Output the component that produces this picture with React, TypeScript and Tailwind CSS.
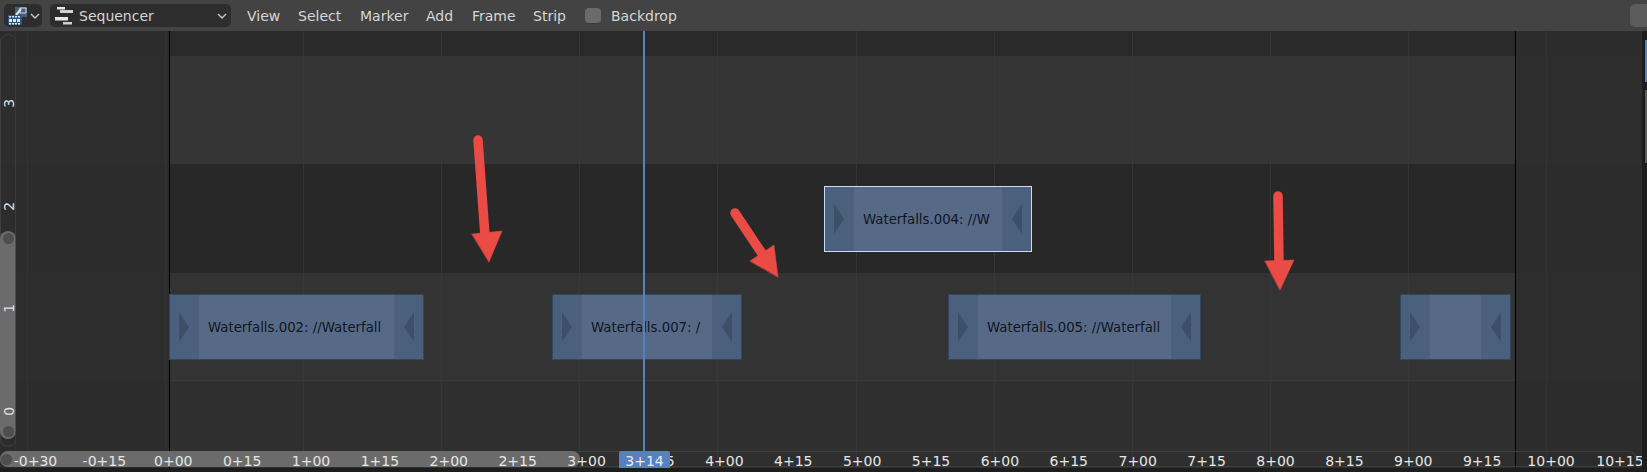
import React from 'react';

const font = { fontFamily: '"DejaVu Sans", sans-serif' };

const menus = [
  { label: 'View', w: 'w-[51px]' },
  { label: 'Select', w: 'w-[62px]' },
  { label: 'Marker', w: 'w-[66px]' },
  { label: 'Add', w: 'w-[46px]' },
  { label: 'Frame', w: 'w-[61px]' },
  { label: 'Strip', w: 'w-[50px]' },
];

const timeLabels = [
  '-0+30', '-0+15', '0+00', '0+15', '1+00', '1+15', '2+00', '2+15', '3+00', '3+15', '4+00',
  '4+15', '5+00', '5+15', '6+00', '6+15', '7+00', '7+15', '8+00', '8+15', '9+00', '9+15',
  '10+00', '10+15',
];

const strips = [
  { left: 169, top: 294, w: 255, label: 'Waterfalls.002: //Waterfall' },
  { left: 552, top: 294, w: 190, label: 'Waterfalls.007: /' },
  { left: 948, top: 294, w: 253, label: 'Waterfalls.005: //Waterfall' },
  { left: 1400, top: 294, w: 111, label: '' },
  { left: 824, top: 186, w: 208, label: 'Waterfalls.004: //W', selected: true },
];

function EditorIcon() {
  return (
    <svg width="22" height="20" viewBox="0 0 22 20">
      <rect x="8" y="1" width="12" height="10" fill="#4a5f7c" />
      <path d="M13 2h6v5h-6z" fill="none" stroke="#d4dbe4" strokeWidth="1" />
      <path d="M9 9l5-6" stroke="#e4e4e4" strokeWidth="2" />
      <rect x="1" y="9" width="14" height="10" fill="#2c5486" />
      <path d="M2 10h2v1.500H2zM5 10h2v1.500H5zM8 10h2v1.500H8zM11 10h2v1.500h-2zM2 13h3v3H2zM6 13h3v3H6zM10 13h3v3h-3zM2 17h2v1.500H2zM5 17h2v1.500H5zM8 17h2v1.500H8zM11 17h2v1.500h-2z" fill="#dfe8f3" />
    </svg>
  );
}

function SequencerIcon() {
  return (
    <svg width="20" height="20" viewBox="0 0 20 20">
      <rect x="3" y="1" width="8" height="2.500" fill="#e8e8e8" />
      <rect x="6" y="4" width="13" height="3" fill="#d2d2d2" />
      <rect x="1" y="11" width="13" height="3.500" fill="#e8e8e8" />
      <rect x="9" y="16" width="9" height="2.500" fill="#d2d2d2" />
    </svg>
  );
}

function Chevron() {
  return (
    <svg width="10" height="6" viewBox="0 0 10 6" fill="none">
      <path d="M1 1l4 4 4-4" stroke="#c8c8c8" strokeWidth="1.4" />
    </svg>
  );
}

function Strip({ left, top, w, label, selected }: { left: number; top: number; w: number; label: string; selected?: boolean }) {
  return (
    <div
      className={`absolute flex h-[66px] border ${selected ? 'border-[#c9dcf2]' : 'border-[#2f4664]'} bg-[#566a88]`}
      style={{ left, top: top - 31, width: w }}
    >
      <div className="flex h-full w-[29px] shrink-0 items-center bg-[#4b607c] pl-[9px]">
        <div className="h-[30px] w-[10px] bg-[#3b4f69] [clip-path:polygon(0_0,100%_50%,0_100%)]" />
      </div>
      <div className="min-w-0 flex-1 overflow-hidden whitespace-nowrap pl-[9px] text-[13.300px] leading-[66px] text-[#10151e]">
        {label}
      </div>
      <div className="flex h-full w-[29px] shrink-0 items-center justify-end bg-[#4b607c] pr-[9px]">
        <div className="h-[30px] w-[10px] bg-[#3b4f69] [clip-path:polygon(100%_0,0_50%,100%_100%)]" />
      </div>
    </div>
  );
}

export default function App() {
  return (
    <div className="flex h-[472px] w-[1647px] flex-col overflow-hidden bg-[#1d1d1d]" style={font}>
      {/* header */}
      <div className="flex h-[31px] shrink-0 items-center bg-[#434343] pl-[4px] text-[14px] text-[#d6d6d6]">
        <div className="flex h-[23px] w-[38px] items-center gap-[1px] rounded-[5px] bg-[#2d2d2d] pl-[3px]">
          <EditorIcon />
          <Chevron />
        </div>
        <div className="ml-[8px] flex h-[23px] w-[181px] items-center rounded-[5px] bg-[#2d2d2d] pl-[4px] pr-[4px]">
          <SequencerIcon />
          <span className="ml-[5px] flex-1 pt-[2px]">Sequencer</span>
          <Chevron />
        </div>
        <div className="ml-[16px] flex pt-[2px]">
          {menus.map(m => (
            <span key={m.label} className={m.w}>{m.label}</span>
          ))}
        </div>
        <div className="ml-[2px] h-[16px] w-[16px] rounded-[4px] border-b border-[#3a3a3a] bg-[#6a6a6a]" />
        <span className="ml-[10px] pt-[2px]">Backdrop</span>
        <div className="ml-auto h-[23px] w-[17px] rounded-l-[5px] bg-[#5c5c5c]" />
      </div>

      {/* canvas */}
      <div className="relative flex h-[441px] flex-col overflow-hidden bg-[#2e2e2e]">
        <div className="h-[25px] bg-[#2a2a2a]" />
        <div className="h-[108px] bg-[#353535]" />
        <div className="h-[109px] bg-[#282828]" />
        <div className="h-[108px] border-b border-[#3b3b3b] bg-[#333333]" />
        <div className="flex-1 bg-[#2f2f2f]" />

        {/* vertical grid */}
        <div className="absolute inset-0 ml-[27px] flex">
          {Array.from({ length: 12 }).map((_, i) => (
            <div key={i} className="h-full w-[138.100px] shrink-0 border-l border-[#3a3a3a]/70" />
          ))}
        </div>

        {/* out of range shade */}
        <div className="absolute bottom-0 left-0 top-0 w-[170px] border-r border-black bg-[#2c2c2c]/90" />
        <div className="absolute bottom-0 left-[1515px] top-0 right-0 border-l border-black bg-[#2c2c2c]/90" />

        {/* gridlines again over the shade, faint */}
        <div className="absolute bottom-0 left-[27px] top-0 w-px bg-[#353535]/70" />
        <div className="absolute bottom-0 left-[165px] top-0 w-px bg-[#353535]/70" />
        <div className="absolute bottom-0 left-[1546px] top-0 w-px bg-[#353535]/70" />

        {strips.map(s => (
          <Strip key={s.left} {...s} />
        ))}

        {/* playhead */}
        <div className="absolute bottom-0 left-[643px] top-0 w-[2px] bg-[#5680c2]" />

        {/* arrows */}
        <svg className="absolute left-0 top-[-31px]" width="1647" height="472" viewBox="0 0 1647 472">
          <g fill="#ea4b44" stroke="#ea4b44" strokeLinecap="round">
            <path d="M478 140L485 236" strokeWidth="9.500" fill="none" />
            <path d="M472 234L502 231L489 262Z" strokeWidth="0.5" />
            <path d="M735 213L763 255" strokeWidth="9.500" fill="none" />
            <path d="M750 261L774 245L778 277Z" strokeWidth="0.5" />
            <path d="M1278 196L1279 264" strokeWidth="9.500" fill="none" />
            <path d="M1265 261L1294 260L1280 290Z" strokeWidth="0.5" />
          </g>
        </svg>

        {/* channel scrollbar */}
        <div className="absolute left-0 top-[3px] h-[413px] w-[16px] rounded-[8px] border border-[#3e3e3e]" />
        <div className="absolute left-0 top-[200px] flex h-[208px] w-[16px] flex-col items-center justify-between rounded-[8px] bg-[#6b6b6b] py-[2px]">
          <div className="h-[11px] w-[11px] rounded-full bg-[#4e4e4e]" />
          <div className="h-[11px] w-[11px] rounded-full bg-[#4e4e4e]" />
        </div>
        <div className="absolute left-[15px] top-0 bottom-0 w-px bg-[#3a3a3a]/60" />
        <div className="absolute left-[1px] top-[21px] flex h-[410px] w-[16px] flex-col-reverse items-center text-[14px] text-[#e0e0e0]">
          {['0', '1', '2', '3'].map(n => (
            <div key={n} className="flex h-[102.500px] w-[16px] shrink-0 -rotate-90 items-center justify-center">{n}</div>
          ))}
        </div>

        {/* time scrollbar and ruler */}
        <div className="absolute left-0 top-[420px] h-[16px] w-[1637px] rounded-[8px] border border-[#3e3e3e]" />
        <div className="absolute left-0 top-[420px] flex h-[16px] w-[580px] items-center rounded-[8px] bg-[#6b6b6b] pl-[1px]">
          <div className="h-[11px] w-[11px] rounded-full bg-[#4e4e4e]" />
        </div>
        <div className="absolute left-[1px] top-[422px] flex h-[16px] items-center text-[14px] leading-[16px] text-[#e6e6e6]">
          {timeLabels.map(t => (
            <div key={t} className="w-[68.900px] shrink-0 text-center whitespace-nowrap">{t}</div>
          ))}
        </div>
        <div className="absolute left-[619px] top-[420px] flex h-[18px] w-[51px] items-center justify-center rounded-t-[2px] bg-[#5680c2] pt-[2px] text-[14px] text-[#ececec]">
          3+14
        </div>

        {/* rounded corners of the region and side scrollbars */}
        <div className="absolute right-0 top-0 bottom-0 w-[5px] bg-[#1d1d1d]" />
        <div className="absolute right-0 top-[9px] h-[42px] w-[2px] bg-[#5680c2]" />
        <div className="absolute right-0 top-[59px] h-[73px] w-[2px] bg-[#5c5c5c]" />
        <div className="absolute bottom-0 left-0 right-0 h-[4px] bg-[#1d1d1d]" />
      </div>
    </div>
  );
}
